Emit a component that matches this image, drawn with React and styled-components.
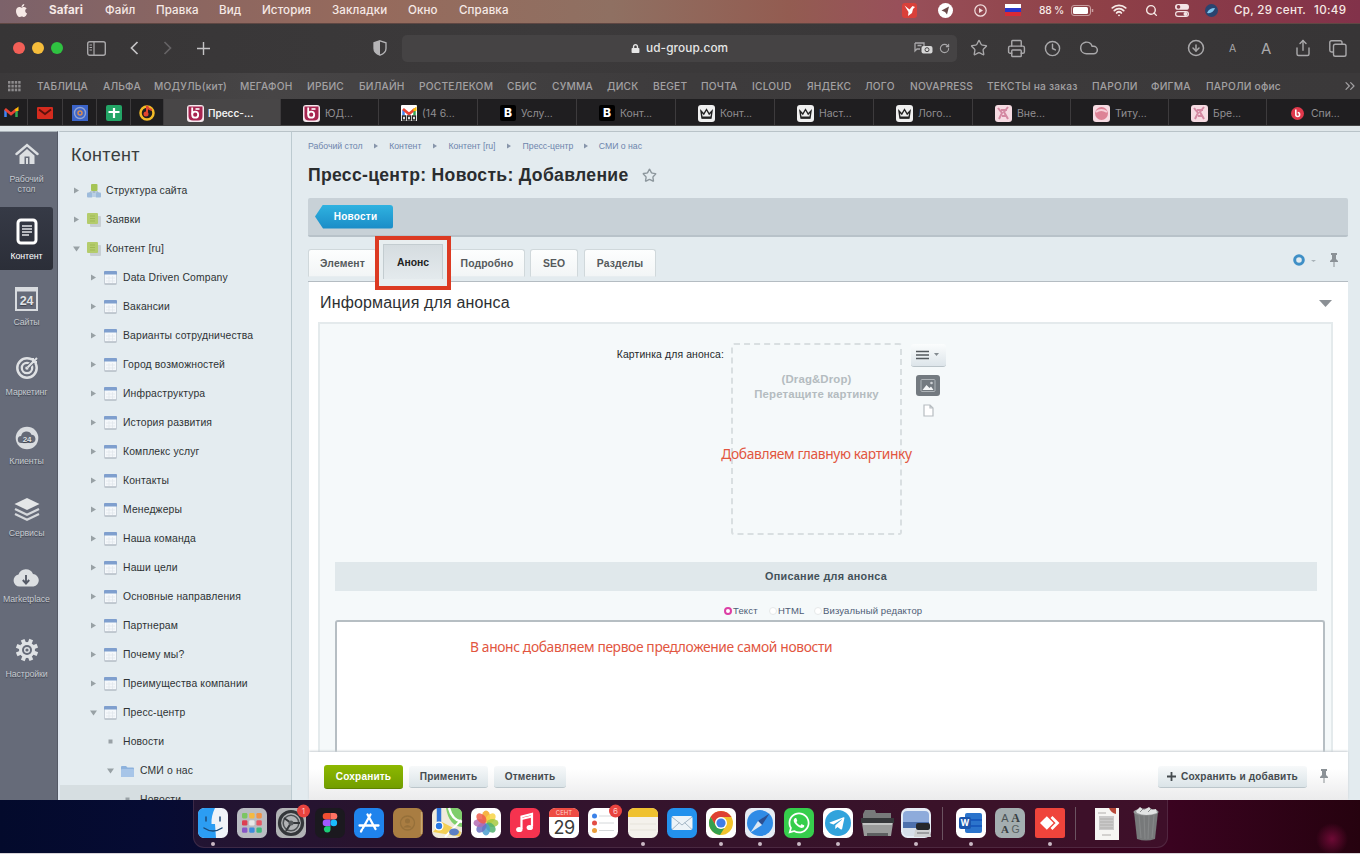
import React from "react";
import styled, { createGlobalStyle, css } from "styled-components";
import {
  Star, Printer, Clock, Cloud, ArrowDownCircle, Share, Wifi, Search,
  RotateCw, ChevronsRight,
} from "lucide-react";
import { FaApple, FaWhatsapp, FaTelegramPlane, FaLock } from "react-icons/fa";

const GlobalStyle = createGlobalStyle`
  * { box-sizing: border-box; }
  body { margin: 0; background: #000; overflow: hidden; }
  svg { display: block; flex: none; }
`;

const Desktop = styled.div`
  width: 1360px;
  height: 854px;
  display: flex;
  flex-direction: column;
  overflow: hidden;
  font-family: Inter, "Liberation Sans", sans-serif;
  white-space: nowrap;
`;

/* ---------- macOS menu bar ---------- */
const MenuBar = styled.div`
  height: 24px;
  flex: none;
  display: flex;
  align-items: center;
  padding-bottom: 3px;
  color: #f6e9e6;
  font-size: 11.6px;
  font-weight: 500;
  letter-spacing: 0.1px;
  border-bottom: 1px solid #5f4743;
  background: linear-gradient(90deg, #7c626a 0%, #8c6660 15%, #966a5c 27%, #8f7062 45%, #935c51 58%, #98505a 66%, #8f4147 80%, #82324a 100%);
`;
const Slot = styled.div`
  width: ${(p) => p.$w}px;
  margin-left: ${(p) => p.$ml || 0}px;
  flex: none;
  display: flex;
  align-items: center;
  font-weight: ${(p) => (p.$bold ? 700 : "inherit")};
  font-size: ${(p) => (p.$size ? p.$size + "px" : "inherit")};
  letter-spacing: ${(p) => (p.$ls !== undefined ? p.$ls + "px" : "inherit")};
`;

/* ---------- Safari chrome ---------- */
const Chrome = styled.div`
  height: 49px;
  flex: none;
  display: flex;
  align-items: center;
  padding: 0 0 1px 13px;
  color: #a9a8aa;
  background: linear-gradient(90deg, #373536, #3c3a3b 40%, #373536);
`;
const Light = styled.i`
  width: 12px;
  height: 12px;
  border-radius: 50%;
  margin-right: 7px;
  background: ${(p) => p.$c};
`;
const AddressBar = styled.div`
  width: 555px;
  height: 27px;
  border-radius: 5px;
  background: #454344;
  color: #e6e6e6;
  display: flex;
  align-items: center;
  padding-left: 229px;
  margin-right: 13px;
  font-size: 11.8px;
  font-weight: 500;
  letter-spacing: 0.1px;
  gap: 6px;
`;
const AddressTools = styled.div`
  margin-left: auto;
  padding-right: 7px;
  display: flex;
  align-items: center;
  gap: 6px;
  color: #a9a8aa;
`;
const Bookmarks = styled.div`
  height: 26px;
  flex: none;
  display: flex;
  align-items: center;
  padding: 0 0 0 8px;
  color: #a3a1a3;
  font-size: 10.2px;
  font-weight: 500;
  letter-spacing: 0.2px;
  background: linear-gradient(90deg, #3b393a, #474546 20%, #3d3b3c 50%, #3b393a);
`;
const TabStrip = styled.div`
  height: 27px;
  flex: none;
  display: flex;
  background: #1f1e20;
  border-bottom: 1px solid #454545;
`;
const Pinned = styled.div`
  width: ${(p) => p.$w}px;
  padding: 2px ${(p) => p.$pr || 0}px 0 0;
  flex: none;
  display: flex;
  align-items: center;
  justify-content: center;
  border-right: 1px solid #3d3b3d;
`;
const BrowserTab = styled.div`
  width: ${(p) => p.$w}px;
  flex: none;
  display: flex;
  align-items: center;
  gap: ${(p) => (p.$active ? 4 : 5)}px;
  padding: 2px 0 0 ${(p) => (p.$active ? 23 : 22)}px;
  overflow: hidden;
  border-right: 1px solid #3d3b3d;
  font-size: ${(p) => (p.$active ? 10 : 10.4)}px;
  font-weight: ${(p) => (p.$active ? 600 : 400)};
  color: ${(p) => (p.$active ? "#f2f2f2" : "#918f92")};
  background: ${(p) => (p.$active ? "#484647" : "transparent")};
`;

/* ---------- Page ---------- */
const Page = styled.div`
  height: 674px;
  flex: none;
  display: flex;
  overflow: hidden;
  border-top: 5px solid #e0e7ea;
  background: #e3ebef;
  font-family: "Liberation Sans", Arial, sans-serif;
`;
const Rail = styled.nav`
  width: 58px;
  flex: none;
  border-top: 1px solid #a9b1b8;
  background: #666b79;
  border-right: 1px solid #545966;
  display: flex;
  flex-direction: column;
`;
const RailItem = styled.div`
  height: ${(p) => p.$h}px;
  width: 53px;
  padding-top: ${(p) => p.$pt}px;
  display: flex;
  flex-direction: column;
  align-items: center;
  gap: ${(p) => p.$gap}px;
  color: ${(p) => (p.$active ? "#fff" : "#c6cad0")};
  font-size: 8.8px;
  letter-spacing: -0.1px;
  line-height: 10px;
  text-align: center;
  white-space: pre;
  text-shadow: 0 1px 1px #3b3f4a;
  ${(p) => p.$active && css`
    background: linear-gradient(#363a46, #2b2e38);
    border-radius: 0 3px 3px 0;
  `}
`;
const Tree = styled.aside`
  width: 234px;
  flex: none;
  border-top: 1px solid #b9c3c8;
  border-left: 2px solid #dfe7f0;
  border-right: 1px solid #bccad0;
  background: #e4ecf0;
  overflow: hidden;
  color: #2f3335;
`;
const TreeTitle = styled.h2`
  margin: 0;
  padding: 13px 0 0 11px;
  height: 44px;
  font-size: 18px;
  line-height: 20px;
  font-weight: 400;
  letter-spacing: 0.3px;
  color: #3a3e40;
`;
const TreeRow = styled.div`
  height: 29px;
  display: flex;
  align-items: center;
  padding-left: ${(p) => p.$pad}px;
  font-size: 10.4px;
  letter-spacing: 0.14px;
  background: ${(p) => (p.$selected ? "#d6dee1" : "transparent")};
`;
const Marker = styled.span`
  width: ${(p) => p.$w}px;
  flex: none;
`;

const Main = styled.main`
  flex: 1;
  display: flex;
  flex-direction: column;
  padding: 0 12px 0 16px;
  border-top: 1px solid #b9c3c8;
  color: #2f3335;
`;
const Crumbs = styled.div`
  height: 28px;
  display: flex;
  align-items: center;
  font-size: 8.7px;
  color: #6d85ad;
`;
const Title = styled.h1`
  margin: 0;
  height: 30px;
  display: flex;
  align-items: center;
  gap: 13px;
  font-size: 17.6px;
  font-weight: 700;
  letter-spacing: 0.3px;
  color: #2a2d2f;
`;
const ActionBar = styled.div`
  height: 39px;
  margin-top: 8px;
  flex: none;
  display: flex;
  align-items: center;
  padding-left: 7px;
  background: #c8d1d7;
  border-bottom: 2px solid #b8c2c9;
  border-radius: 2px;
`;
const BackButton = styled.div`
  width: 78px;
  height: 24px;
  padding-left: 3px;
  display: flex;
  align-items: center;
  justify-content: center;
  color: #fff;
  font-size: 10px;
  font-weight: 700;
  letter-spacing: 0.25px;
  background: linear-gradient(#2fb2e0, #1b8cc7);
  border-radius: 3px;
  clip-path: polygon(0 50%, 8px 0, 100% 0, 100% 100%, 8px 100%);
`;
const FormTabs = styled.div`
  height: 45px;
  padding-top: 12px;
  display: flex;
  align-items: flex-start;
  border-bottom: 1px solid #b4bcc2;
`;
const FormTab = styled.div`
  width: ${(p) => p.$w}px;
  margin-right: ${(p) => p.$mr || 0}px;
  height: 28px;
  display: flex;
  align-items: center;
  justify-content: center;
  font-size: 10.4px;
  font-weight: 700;
  letter-spacing: 0.1px;
  color: #55595c;
  background: linear-gradient(#fdfefe, #f2f5f6);
  border: 1px solid #d0d8db;
  border-bottom-color: #e7edf0;
  border-radius: 3px 3px 0 0;
`;
const Highlight = styled.div`
  width: 76px;
  height: 54px;
  margin: -13px -2px 0 -2px;
  position: relative;
  border: 4px solid #dc3a22;
  padding: 4px;
  background: #e8eef0;
`;
const ActiveTab = styled.div`
  height: 35px;
  border: 1px solid #c3ccd0;
  border-width: 1px 1px 0;
  background: linear-gradient(#d5dce0, #e4eaed);
  display: flex;
  align-items: center;
  justify-content: center;
  font-size: 10.4px;
  font-weight: 700;
  color: #222;
`;
const TabTools = styled.div`
  margin: 4px 9px 0 auto;
  display: flex;
  align-items: center;
  gap: 6px;
`;
const Card = styled.section`
  flex: 1;
  min-height: 0;
  margin-left: 1px;
  padding: 0 15px 0 9px;
  background: #fff;
  overflow: hidden;
`;
const CardHead = styled.div`
  height: 40px;
  display: flex;
  align-items: center;
  justify-content: space-between;
  padding: 2px 1px 0 2px;
  font-size: 16px;
  letter-spacing: 0.15px;
  color: #2d3032;
`;
const Body = styled.div`
  height: 440px;
  background: #f5f9fa;
  border: 2px solid #e4eaec;
  border-bottom: 0;
  padding: 0 6px 0 15px;
`;
const PictureRow = styled.div`
  height: 238px;
  padding-top: 19px;
  display: flex;
`;
const FieldLabel = styled.div`
  width: 389px;
  padding-top: 5px;
  text-align: right;
  font-size: 10.4px;
  letter-spacing: 0.13px;
  line-height: 14px;
  color: #25282a;
`;
const DropZone = styled.div`
  width: 171px;
  height: 192px;
  margin: 0 8px 0 7px;
  border: 2px dashed #d9dfe1;
  border-radius: 3px;
  padding-top: 27px;
  display: flex;
  flex-direction: column;
  align-items: center;
  font-size: 11.4px;
  line-height: 14.5px;
  font-weight: 700;
  letter-spacing: 0.15px;
  color: #b4bcc0;
`;
const Note = styled.div`
  font-family: "Noto Sans", "Open Sans", sans-serif;
  font-weight: 400;
  font-size: 13.8px;
  line-height: 18px;
  letter-spacing: -0.36px;
  color: #e2563f;
  margin: ${(p) => p.$m};
`;
const DropTools = styled.div`
  display: flex;
  flex-direction: column;
  align-items: center;
  width: 36px;
`;
const MenuButton = styled.div`
  width: 35px;
  height: 23px;
  margin-top: 1px;
  display: flex;
  align-items: center;
  justify-content: center;
  background: linear-gradient(#fbfdfd, #dde5ea);
  border-bottom: 1px solid #b9c3c8;
  border-radius: 3px;
`;
const ToolGap = styled.div`
  height: 8px;
`;
const Section = styled.div`
  height: 29px;
  margin-right: 8px;
  padding-bottom: 2px;
  display: flex;
  align-items: center;
  justify-content: center;
  background: #e0e8eb;
  color: #44525a;
  font-size: 10.8px;
  font-weight: 700;
  letter-spacing: 0.28px;
`;
const Modes = styled.div`
  height: 29px;
  padding: 10px 0 0 389px;
  display: flex;
  align-items: center;
  font-size: 9.5px;
  letter-spacing: 0.14px;
  color: #4d5b75;
`;
const Radio = styled.i`
  width: 8px;
  height: 8px;
  border-radius: 50%;
  margin-right: 1px;
  margin-top: 1px;
  background: #fff;
  border: ${(p) => (p.$on ? "2.5px solid #dc3fa5" : "1px solid #e6e9ea")};
`;
const TextArea = styled.div`
  height: 150px;
  border: 2px solid #b6bec3;
  border-bottom: 0;
  border-radius: 3px 3px 0 0;
  background: #fff;
`;
const Footer = styled.footer`
  height: 48px;
  flex: none;
  margin: 0 0 0 1px;
  display: flex;
  align-items: center;
  gap: 6px;
  padding: 0 19px 0 15px;
  background: linear-gradient(#fff 0, #fff 35%, #ebebec 100%);
  box-shadow: 0 -1px 2px #c9cfd3;
  position: relative;
`;
const Button = styled.div`
  width: ${(p) => p.$w}px;
  height: ${(p) => (p.$primary ? 24 : 22)}px;
  margin-top: 1px;
  display: flex;
  align-items: center;
  justify-content: center;
  gap: 5px;
  font-size: 10.1px;
  font-weight: 700;
  letter-spacing: 0.15px;
  border-radius: 3px;
  color: ${(p) => (p.$primary ? "#fff" : "#454b4f")};
  background: ${(p) => (p.$primary ? "linear-gradient(#8db800, #729e00)" : "linear-gradient(#f7f9fa, #dbe4e8)")};
  border-bottom: 1px solid ${(p) => (p.$primary ? "#5e8400" : "#bcc6cb")};
`;
const Push = styled.div` flex: 1; `;

/* ---------- Dock ---------- */
const DockArea = styled.div`
  height: 54px;
  flex: none;
  display: flex;
  justify-content: center;
  border-bottom: 1px solid #d8d4d8;
  background:
    radial-gradient(circle at 1332px 39px, #6d0a35 0, transparent 16px),
    linear-gradient(90deg, #030a2c 0, #060b33 11%, #150a28 28%, #280a26 45%, #33081f 70%, #3a0320 86%, #26020f 100%);
`;
const Dock = styled.div`
  width: 975px;
  height: 48px;
  display: flex;
  padding-top: 7px;
  border-radius: 0 0 11px 11px;
  background: rgba(68, 34, 56, 0.42);
  border: 1px solid rgba(140, 110, 130, 0.25);
  border-top: 0;
`;
const DockItem = styled.div`
  width: 39.05px;
  flex: none;
  display: flex;
  flex-direction: column;
  align-items: center;
  gap: 4px;
`;
const Running = styled.i`
  width: 4px;
  height: 4px;
  border-radius: 50%;
  background: #c9b9c4;
`;
const DockLine = styled.i`
  width: 1px;
  height: 33px;
  margin: 0 ${(p) => p.$r}px 0 ${(p) => p.$l}px;
  background: #6b5361;
`;

/* ---------- Small drawings ---------- */
const S = ({ w, h = w, vb, children, ...r }) => (
  <svg width={w} height={h} viewBox={vb || `0 0 ${w} ${h}`} fill="none" {...r}>{children}</svg>
);

const Arrow = ({ open }) => (
  <S w={7}><path d={open ? "M0 1.500h7L3.500 6.500z" : "M1 .5v6L6 3.500z"} fill="#98a1a5" /></S>
);
const Bullet = () => <S w={5}><rect x="0.5" y="0.5" width="4" height="4" fill="#99a1a6" /></S>;
const TableIcon = () => (
  <S w={13} h={14}>
    <rect x=".5" y=".5" width="12" height="12.500" rx="1" fill="#f5f8fb" stroke="#c6ced6" />
    <path d="M.5 13h12" stroke="#aab3bc" />
    <path d="M0 1q0-1 1-1h11q1 0 1 1v2.600H0z" fill="#7f9fce" />
    <path d="M2 7h9M2 10h9M5 5v7M8.500 5v7" stroke="#dfe5eb" strokeWidth=".7" />
  </S>
);
const GreenIcon = () => (
  <S w={14}>
    <rect x="3" y="3" width="11" height="11" rx="1" fill="#c8cfd4" />
    <rect x="0" y="0" width="11" height="11" rx="1" fill="#b4cc6c" />
    <path d="M3 3h5M3 5.500h5M3 8h5" stroke="#a0ba54" />
  </S>
);
const StructIcon = () => (
  <S w={14}>
    <path d="M7 6v3M3 10V8h8v2" stroke="#92a9bd" />
    <rect x="4" y="0" width="6.500" height="7" rx="1" fill="#a5c455" />
    <rect x="0" y="8.500" width="5.500" height="5" rx="1" fill="#9dbbdb" />
    <rect x="8.500" y="8.500" width="5.500" height="5" rx="1" fill="#9dbbdb" />
    <rect x="5" y="9" width="4" height="4" fill="#b9cfe5" />
  </S>
);
const FolderIcon = () => (
  <S w={14} h={12}>
    <path d="M0 2q0-1 1-1h4l1.500 1.500H12q1 0 1 1V11q0 1-1 1H1q-1 0-1-1z" fill="#8db2dd" />
    <rect x="0" y="4" width="13" height="8" rx="1" fill="#a7c5e8" />
  </S>
);
const Pin = () => (
  <S w={10} h={14}><path d="M2 0h6v2H7v4l2 2v1H1V8l2-2V2H2zM4.500 9h1v5h-1z" fill="#8b9196" /></S>
);

const RailHome = () => (
  <S w={24} h={22}>
    <path d="M1.500 11L12 2l10.500 9" stroke="#dcdfe2" strokeWidth="2.400" strokeLinecap="round" />
    <path d="M4.500 12.500L12 6l7.500 6.500V21h-15z" fill="#dcdfe2" />
    <path d="M9.500 21v-7.500h5V21z" fill="#666b79" /><path d="M11 21v-6h2v6z" fill="#dcdfe2" />
  </S>
);
const RailContent = () => (
  <S w={22} h={27}>
    <rect x="2" y="2" width="18" height="23" rx="3" stroke="#fff" strokeWidth="3" />
    <path d="M6 8h10M6 11h10M6 14h10M6 17h7" stroke="#e2e4e7" strokeWidth="1.700" />
  </S>
);
const RailSites = () => (
  <S w={24} h={24}>
    <rect x="1" y="1" width="21" height="22" stroke="#d8dbdf" strokeWidth="2" />
    <path d="M1 3h21" stroke="#d8dbdf" strokeWidth="3" />
    <text x="11.500" y="18" textAnchor="middle" fontSize="12.500" fontWeight="700" fontFamily="Liberation Sans" fill="#e0e3e6">24</text>
  </S>
);
const RailTarget = () => (
  <S w={24}>
    <circle cx="12" cy="13" r="9.700" stroke="#dfe1e4" strokeWidth="2.500" />
    <circle cx="12" cy="13" r="5.200" stroke="#dfe1e4" strokeWidth="2.300" />
    <circle cx="12" cy="13" r="1.800" fill="#dfe1e4" />
    <path d="M12.500 12.500L22 3" stroke="#666b79" strokeWidth="4" />
    <path d="M12.500 12.500L22 3M18 3v4h4" stroke="#dfe1e4" strokeWidth="2" />
  </S>
);
const RailClients = () => (
  <S w={24}>
    <circle cx="12" cy="12" r="11.300" fill="#d9dce0" />
    <path d="M6.500 17a3.500 3.500 0 0 1-.4-7 5.500 5.500 0 0 1 10.400-1.200A4.200 4.200 0 0 1 17.500 17z" fill="#646977" />
    <text x="12" y="15.500" textAnchor="middle" fontSize="8" fontWeight="700" fontFamily="Liberation Sans" fill="#dde0e3">24</text>
  </S>
);
const RailLayers = () => (
  <S w={26} h={24}>
    <path d="M13 0l12.500 6L13 12 .5 6z" fill="#e4e6e8" />
    <path d="M1 11l12 5.800L25 11M1 16l12 5.800L25 16" stroke="#d5d8dc" strokeWidth="2.300" />
  </S>
);
const RailCloud = () => (
  <S w={27} h={19}>
    <path d="M6.500 18.500a6 6 0 0 1-1-11.900A7.800 7.800 0 0 1 20 6a6.300 6.300 0 0 1 .5 12.500z" fill="#dcdfe2" />
    <path d="M13 7v8M9.800 12l3.200 3.500 3.200-3.500" stroke="#555a67" strokeWidth="1.900" />
  </S>
);
const RailGear = () => (
  <S w={24}>
    {[0, 45, 90, 135].map((a) => (
      <path key={a} d="M12 .8v22.400" stroke="#dfe2e5" strokeWidth="4" transform={`rotate(${a + 22} 12 12)`} />
    ))}
    <circle cx="12" cy="12" r="8" fill="#dfe2e5" />
    <circle cx="12" cy="12" r="5" fill="#666b79" />
    <circle cx="12" cy="12" r="3" fill="#dfe2e5" /><circle cx="12" cy="12" r="1.600" fill="#666b79" />
  </S>
);

/* favicons */
const BLogo = ({ dot }) => (
  <S w={17}>
    {dot ? <circle cx="8.500" cy="8.500" r="6.500" fill="#e0384b" /> : <><rect width="17" height="17" rx="3" fill="#f5e7ec" /><path d="M1.500 1.500h14v9.500q0 4.500-4.500 4.500H6q-4.500 0-4.500-4.500z" fill="#a82550" /></>}
    {dot
      ? <path d="M6.800 4.500v5q0 2 1.900 2t1.900-2-1.900-2" stroke="#fff" strokeWidth="1.600" />
      : <><path d="M5.200 2.500V9.500" stroke="#fff" strokeWidth="1.800" /><circle cx="8.200" cy="9.700" r="3" stroke="#fff" strokeWidth="1.800" /><path d="M8.500 4h4" stroke="#fff" strokeWidth="1.600" /></>}
  </S>
);
const BlackB = () => (
  <S w={16}><rect width="16" height="16" rx="2" fill="#000" /><text x="8" y="12.300" textAnchor="middle" fontSize="12" fontWeight="800" fontFamily="Inter" fill="#fff">B</text></S>
);
const Crown = () => (
  <S w={17}><rect width="17" height="17" rx="3" fill="#f0f0f0" /><path d="M3 6l2.800 3L8.500 4.500 11.200 9 14 6l-1 7H4z" stroke="#222" strokeWidth="1.400" fill="#f0f0f0" /><path d="M4 12.500h9" stroke="#222" strokeWidth="2" /></S>
);
const Pink = ({ round }) => (
  <S w={17}><rect width="17" height="17" rx="3" fill="#f6dbe2" />
    {round ? <><circle cx="8.500" cy="8.500" r="6.500" fill="#dd8296" /><path d="M3 7q5-4 11 0" stroke="#f6ccd6" strokeWidth="2" /></>
      : <path d="M3 3l4 5-3 6M13 2L9 7l4 7M6 5h6M7 11h5" stroke="#d489a2" strokeWidth="2" />}
  </S>
);
const Gmail = ({ news }) => (
  <S w={16}>
    {news && <rect width="16" height="16" rx="1" fill="#fff" />}
    <path d="M2.500 12V5" stroke="#4285f4" strokeWidth="2.500" /><path d="M13.500 12V5" stroke="#34a853" strokeWidth="2.500" />
    <path d="M2 4l6 5 6-5" stroke="#ea4335" strokeWidth="2.800" /><path d="M12.300 5.500L14.500 3.700V6" stroke="#fbbc04" strokeWidth="2" />
    {news && <><rect y="10" width="16" height="6" fill="#fff" /><path d="M1.500 11h3v4h-3zM6.500 11h3v4h-3zM11.500 11h3v4h-3z" stroke="#222" strokeWidth="1.300" /></>}
  </S>
);

/* dock tiles */
const Tile = ({ bg = "#fff", children, badge }) => (
  <S w={34} h={31} vb="-2 -1 34 31" overflow="visible">
    <rect width="30" height="30" rx="6.500" fill={bg} />
    {children}
    {badge && <><circle cx="27.500" cy="3" r="6.500" fill="#e8433f" /><text x="27.500" y="6" textAnchor="middle" fontSize="8" fontFamily="Inter" fill="#ffc9c5">{badge}</text></>}
  </S>
);
const petals = ["#f5a623", "#f8d347", "#a5c940", "#4fb06d", "#4b9ed0", "#6b70c4", "#b46bb4", "#ee5a4c"];
const dock = [
  [<Tile bg="#f0f3f8"><path d="M6.500 0H17q-4 8-3.500 16H17l1 14H6.500Q0 30 0 23.500v-17Q0 0 6.500 0z" fill="#2c9df3" /><path d="M8 9v4M22 9v4M6 20q9 6 18 0" stroke="#1c4a79" strokeWidth="1.500" strokeLinecap="round" /></Tile>, 1],
  [<Tile bg="#b9bcc2">{["#7bc563", "#f5b942", "#f0924a", "#dd3f51", "#e8e8e8", "#e55764", "#8857c6", "#3f8cdd", "#40b97b"].map((c, i) => <rect key={i} x={5 + (i % 3) * 7.2} y={5 + Math.floor(i / 3) * 7.2} width="5.400" height="5.400" rx="1.300" fill={c} />)}</Tile>],
  [<Tile bg="#b1b3b5" badge="1"><circle cx="15" cy="15" r="11.500" stroke="#34373a" strokeWidth="3.200" /><circle cx="15" cy="15" r="7.800" stroke="#4c5053" strokeWidth="1.500" /><path d="M15 15L8 10M15 15h9M15 15l-5 8" stroke="#34373a" strokeWidth="2" /><circle cx="15" cy="15" r="2.500" fill="#55595c" /></Tile>],
  [<Tile bg="#1b191f"><path d="M11 5h4.500v6.600H11a3.300 3.300 0 0 1 0-6.600z" fill="#f04e31" /><path d="M15.500 5H19a3.300 3.300 0 0 1 0 6.600h-3.500z" fill="#ff7262" /><path d="M11 11.600h4.500v6.600H11a3.300 3.300 0 0 1 0-6.600z" fill="#a259ff" /><circle cx="18.800" cy="14.900" r="3.300" fill="#1abcfe" /><path d="M11 18.200h4.500v3.300a3.300 3.300 0 1 1-4.500-3.300z" fill="#1bce78" /></Tile>],
  [<Tile bg="#1f83ec"><path d="M16.500 6.500L9 20M13.500 6.500L21.500 21M5.500 17.500h19M8 21.500l-1 2" stroke="#fff" strokeWidth="2.300" strokeLinecap="round" /></Tile>],
  [<Tile bg="#a97d42"><path d="M28.500 4v22" stroke="#c9a873" strokeWidth="1.500" /><circle cx="14.500" cy="15" r="7" stroke="#96703a" strokeWidth="1.300" /><circle cx="14.500" cy="13" r="2.500" fill="#96703a" /><path d="M10 19.500q4.500-5 9 0z" fill="#96703a" /></Tile>],
  [<Tile bg="#efeadb"><path d="M14 0h9.500Q30 0 30 6.500V19Q17 18 14 0z" fill="#7fce6c" /><path d="M17 0q3 12 13 14" stroke="#fff" strokeWidth="2.500" /><path d="M1 24L28 28.500 29 24 10 14z" fill="#f3cf55" /><path d="M7 0v17" stroke="#2f74d9" strokeWidth="4.500" /><circle cx="7" cy="18" r="4.500" fill="#fff" /><circle cx="7" cy="18" r="3.200" fill="#2878e3" /><path d="M13 29L29 12" stroke="#fff" strokeWidth="2" /><ellipse cx="22" cy="24" rx="5" ry="3.500" fill="#5b7fc4" /></Tile>],
  [<Tile>{petals.map((c, i) => <ellipse key={i} cx="15" cy="8.500" rx="4" ry="6" fill={c} opacity=".85" transform={`rotate(${i * 45} 15 15)`} />)}</Tile>],
  [<Tile bg="#f5334f"><path d="M11.500 21V8.500L22 6v12.500" stroke="#fff" strokeWidth="2.200" /><path d="M11.500 11L22 8.500" stroke="#fff" strokeWidth="2" /><ellipse cx="9.300" cy="21.500" rx="3.200" ry="2.600" fill="#fff" /><ellipse cx="19.800" cy="19.500" rx="3.200" ry="2.600" fill="#fff" /></Tile>],
  [<Tile><path d="M0 9V6.500Q0 0 6.500 0h17Q30 0 30 6.500V9z" fill="#ee4c43" /><text x="15" y="7" textAnchor="middle" fontSize="6" fontFamily="Inter" fill="#ffd3d0">СЕНТ</text><text x="15" y="25.500" textAnchor="middle" fontSize="18" fontFamily="Inter" fill="#3b3b3b" letterSpacing="-.5">29</text></Tile>],
  [<Tile badge="6"><circle cx="6.500" cy="8" r="2.500" fill="#3b82e8" /><circle cx="6.500" cy="15" r="2.500" fill="#e34d44" /><circle cx="6.500" cy="22.500" r="2.500" fill="#ea9e3b" /><path d="M11 8h14M11 15h15M11 22.500h15" stroke="#d5d8da" /></Tile>],
  [<Tile bg="#f4f1ec"><path d="M0 9V6.500Q0 0 6.500 0h17Q30 0 30 6.500V9z" fill="#efc130" /><path d="M2 16h26M2 22h26" stroke="#e0dcd5" strokeWidth=".7" /></Tile>, 1],
  [<Tile bg="#2391ed"><rect x="4.500" y="8" width="21" height="14" rx="2" fill="#edf3f8" /><path d="M5 9l10 8 10-8M5 21.500l7.500-7M25 21.500l-7.500-7" stroke="#a4b6c5" /></Tile>],
  [<Tile><circle cx="15" cy="15" r="12" fill="#f2c32d" /><path d="M4.600 9A12 12 0 0 1 25.400 9H15a6 6 0 0 0-5 9z" fill="#de4034" /><path d="M4.600 9A12 12 0 0 0 14 27l5-8a6 6 0 0 1-9-1z" fill="#35a04e" /><circle cx="15" cy="15" r="6" fill="#fff" /><circle cx="15" cy="15" r="4.600" fill="#3f7de8" /></Tile>, 1],
  [<Tile bg="#e6ecf4"><circle cx="15" cy="15" r="13" fill="#2f8be6" /><path d="M24.500 5.500L17 17l-4-4z" fill="#2c4f91" /><path d="M5.500 24.500L13 13l4 4z" fill="#dce7f2" /></Tile>, 1],
  [<Tile bg="#36ce4c"><FaWhatsapp x="3" y="3" size={24} color="#fff" /></Tile>, 1],
  [<Tile><circle cx="15" cy="15" r="13" fill="#31a3dc" /><FaTelegramPlane x="5.500" y="7" size={17} color="#fff" /></Tile>, 1],
  [<S w={34} h={31} vb="-2 -1 34 31"><path d="M3 2h10l1 3h15v7H1V6z" fill="#777a7a" /><path d="M-1 10h33v5H-1z" fill="#35383a" /><path d="M0 15h31l-2 13H2z" fill="#9a9c9b" /><path d="M5 25h21v3H5z" fill="#5d6061" /><path d="M1 15h29v2H1z" fill="#c2c4c3" /></S>],
  [<Tile bg="#e6edf6"><path d="M2 7q0-4 4-4h18q4 0 4 4v12H2z" fill="#8eabdb" /><path d="M2 14h26v6H2z" fill="#4d70ad" /><path d="M2 20h26v3q0 5-4 5H7q-5 0-5-5z" fill="#d7dfea" /><rect x="15" y="15" width="14" height="7" rx="2" fill="#25272b" /><path d="M14 22h15l1 7H13z" fill="#cfd1d3" /><path d="M16 25h12" stroke="#6a6d70" /></Tile>, 1],
  "l1",
  [<Tile><rect x="9" y="5" width="17" height="20" rx="2" fill="#2b74cc" /><path d="M9 12h17M9 18h17" stroke="#185abd" strokeWidth="2" /><rect x="3" y="9" width="12" height="12" rx="2" fill="#1a55ad" /><text x="9" y="18" textAnchor="middle" fontSize="8.500" fontWeight="700" fontFamily="Inter" fill="#fff">W</text></Tile>, 1],
  [<Tile bg="#a4aeb0"><text x="10" y="14" textAnchor="middle" fontSize="11" fontFamily="Liberation Sans" fill="#4b5355">A</text><text x="20.500" y="14" textAnchor="middle" fontSize="12" fontWeight="700" fontFamily="Liberation Serif" fill="#384042">A</text><text x="10" y="25" textAnchor="middle" fontSize="11" fontWeight="700" fontFamily="Liberation Serif" fill="#384042">A</text><text x="20.500" y="25" textAnchor="middle" fontSize="10.500" fontFamily="Liberation Sans" fill="#566062">G</text></Tile>],
  [<S w={34} h={31} vb="-2 -1 34 31"><rect width="30" height="30" rx="2.500" fill="#ef443b" /><path d="M5 15l6.800-6.800L18.600 15l-6.800 6.800z" fill="#fff" /><path d="M16.500 9l6 6-6 6" stroke="#fff" strokeWidth="2.700" /></S>, 1],
  "l2",
  [<S w={34} h={33} vb="-2 -1 34 33"><path d="M3 0h24v32H3z" fill="#f6f5f3" /><path d="M17 0h7v6q-5-1-7-6z" fill="#b8493a" /><path d="M7 8h15v14H7z" fill="#cbcaca" /><path d="M6 5h8M8 11h13M8 14h13M8 17h13M8 20h13M10 27h9" stroke="#b0aeac" strokeWidth="1.100" /></S>],
  [<S w={34} h={35} vb="-2 2 34 35"><path d="M3 7h24l-3 27q-9 3-18 0z" fill="#77797a" /><path d="M8 10l2 23M13 10l1 24M18 10l-1 24M23 10l-2 23" stroke="#858788" strokeWidth="1.200" /><ellipse cx="15" cy="7" rx="12.500" ry="3.500" fill="#969899" /><path d="M5 6l4-4 4 3 5-3 3 3 4-1 1 4q-11 4-20 0z" fill="#e1e3e3" /><path d="M9 7l3-3M17 7l3-3" stroke="#8b8d8e" /></S>],
];

/* ---------- Data ---------- */
const menus = [["Safari", 56, 1], ["Файл", 51], ["Правка", 63], ["Вид", 43], ["История", 70], ["Закладки", 76], ["Окно", 51], ["Справка", 443]];
const bookmarks = [["ТАБЛИЦА", 66], ["АЛЬФА", 51], ["МОДУЛЬ(кит)", 86], ["МЕГАФОН", 67], ["ИРБИС", 52], ["БИЛАЙН", 60], ["РОСТЕЛЕКОМ", 88], ["СБИС", 45], ["СУММА", 55], ["ДИСК", 46], ["BEGET", 48], ["ПОЧТА", 51], ["ICLOUD", 55], ["ЯНДЕКС", 58], ["ЛОГО", 45], ["NOVAPRESS", 77], ["ТЕКСТЫ на заказ", 105], ["ПАРОЛИ", 59], ["ФИГМА", 55], ["ПАРОЛИ офис", 136]];
const browserTabs = [
  ["Пресс-...", 117, <BLogo />, 1], ["ЮД...", 98, <BLogo />], ["(14 6...", 99, <Gmail news />], ["Услу...", 99, <BlackB />],
  ["Конт...", 99, <BlackB />], ["Конт...", 99, <Crown />], ["Наст...", 99, <Crown />], ["Лого...", 99, <Crown />],
  ["Вне...", 98, <Pink />], ["Титу...", 98, <Pink round />], ["Бре...", 98, <Pink />], ["Спи...", 98, <BLogo dot />],
];
const infoBlocks = ["Data Driven Company", "Вакансии", "Варианты сотрудничества", "Город возможностей", "Инфраструктура", "История развития", "Комплекс услуг", "Контакты", "Менеджеры", "Наша команда", "Наши цели", "Основные направления", "Партнерам", "Почему мы?", "Преимущества компании"];
const crumbs = [["Рабочий стол", 66], ["Контент", 44], ["Контент [ru]", 59], ["Пресс-центр", 61], ["СМИ о нас", 60]];
const rail = [
  ["Рабочий\nстол", RailHome, 75, 11, 9], ["Контент", RailContent, 63, 11, 6, 1], ["Сайты", RailSites, 62, 17, 6],
  ["Маркетинг", RailTarget, 70, 23, 8], ["Клиенты", RailClients, 70, 24, 6], ["Сервисы", RailLayers, 70, 26, 6],
  ["Marketplace", RailCloud, 68, 26, 7], ["Настройки", RailGear, 70, 28, 7],
];

const TreeItem = ({ level, open, icon, leaf, selected, children }) => (
  <TreeRow $pad={13 + level * 17 + (leaf ? 1 : 0)} $selected={selected}>
    <Marker $w={leaf ? 15 : 14}>{leaf ? <Bullet /> : <Arrow open={open} />}</Marker>
    {icon && <Marker $w={19}>{icon}</Marker>}
    {children}
  </TreeRow>
);

export default function App() {
  return (
    <Desktop>
      <GlobalStyle />
      <MenuBar>
        <Slot $w={35} $ml={14}><FaApple size={15} /></Slot>
        {menus.map(([t, w, b]) => <Slot key={t} $w={w} $bold={b}>{t}</Slot>)}
        <Slot $w={36}><S w={15}><rect width="15" height="15" rx="3" fill="#d9403a" /><path d="M2.500 2.500l5 4 3-3.500 2.500 1-2 2-1 4-4 3 .5-4z" fill="#fff" /></S></Slot>
        <Slot $w={36}><S w={15}><circle cx="7.500" cy="7.500" r="7.500" fill="#fff" /><path d="M3.500 7.500l7.500-4-2 8-2-2.500z" fill="#6b4a4a" /></S></Slot>
        <Slot $w={31}><S w={13}><circle cx="6.500" cy="6.500" r="5.700" stroke="#f1dede" strokeWidth="1.200" /><path d="M5 4l4 2.500L5 9z" fill="#f1dede" /></S></Slot>
        <Slot $w={34}><S w={16} h={12}><path d="M0 0h16v4H0z" fill="#fff" /><path d="M0 4h16v4H0z" fill="#2a36c9" /><path d="M0 8h16v4H0z" fill="#d92a35" /></S></Slot>
        <Slot $w={32} $size={10.3} $ls={-0.2}>88 %</Slot>
        <Slot $w={40}><S w={23} h={11}><rect x=".5" y=".5" width="19" height="10" rx="2.500" stroke="#c99ea0" /><rect x="2" y="2" width="15" height="7" rx="1.500" fill="#fff" /><path d="M21.500 4v3" stroke="#c99ea0" strokeWidth="1.500" /></S></Slot>
        <Slot $w={34}><Wifi size={16} strokeWidth={2.8} /></Slot>
        <Slot $w={30}><Search size={13} strokeWidth={2.6} /></Slot>
        <Slot $w={30}><S w={14} h={13}><rect width="14" height="5.800" rx="2.900" fill="#f3e3e5" /><circle cx="3.500" cy="2.900" r="1.800" fill="#8a3c49" /><rect x=".6" y="7.600" width="12.800" height="4.800" rx="2.400" stroke="#f3e3e5" strokeWidth="1.200" /><circle cx="10.500" cy="10" r="2" fill="#f3e3e5" /></S></Slot>
        <Slot $w={29}><S w={13}><circle cx="6.500" cy="6.500" r="6.500" fill="#29446f" /><path d="M2 9q2-5 8-5-2 6-8 5z" fill="#7fc3ec" /></S></Slot>
        <Slot $w={80} $ls={0.3}>Ср, 29 сент.</Slot>
        <Slot $w={40} $ls={0.35}>10:49</Slot>
      </MenuBar>

      <Chrome>
        <Light $c="#f25f57" /><Light $c="#f6bd3b" /><Light $c="#2fc241" />
        <Slot $w={47} $ml={17}><S w={19} h={15}><rect x=".7" y=".7" width="17.600" height="13.600" rx="2" stroke="currentColor" strokeWidth="1.400" /><path d="M7 1v13M2.500 4h2.500M2.500 6.500h2.500M2.500 9h2.500" stroke="currentColor" strokeWidth="1.200" /></S></Slot>
        <Slot $w={33} $ml={-4}><S w={9} h={14}><path d="M7.500 1l-6 6 6 6" stroke="#c5c4c6" strokeWidth="1.700" /></S></Slot>
        <Slot $w={34}><S w={9} h={14}><path d="M1.500 1l6 6-6 6" stroke="#656365" strokeWidth="1.700" /></S></Slot>
        <Slot $w={176}><S w={13}><path d="M6.500 0v13M0 6.500h13" stroke="#c5c4c6" strokeWidth="1.400" /></S></Slot>
        <Slot $w={29}><S w={14} h={16}><path d="M7 .8l6 2v5.700q0 4.500-6 6.700-6-2.200-6-6.700V2.800z" stroke="#b5b4b6" strokeWidth="1.300" /><path d="M7 .8v14.400q-6-2.200-6-6.700V2.800z" fill="#b5b4b6" /></S></Slot>
        <AddressBar>
          <FaLock size={9} />ud-group.com
          <AddressTools>
            <S w={19} h={13}><path d="M1 1h9v3M1 1v8l2-2h3M3.500 3.500h4" stroke="currentColor" strokeWidth="1.300" /><rect x="7.500" y="4" width="11" height="7.500" rx="2" fill="#d6d6d6" /><circle cx="13" cy="7.700" r="2" stroke="#454344" /></S>
            <RotateCw size={11} strokeWidth={2.4} />
          </AddressTools>
        </AddressBar>
        <Slot $w={37}><Star size={18} strokeWidth={1.8} /></Slot>
        <Slot $w={37}><Printer size={19} strokeWidth={1.8} /></Slot>
        <Slot $w={35}><Clock size={17} strokeWidth={2} /></Slot>
        <Slot $w={107.5}><Cloud size={20} strokeWidth={1.8} /></Slot>
        <Slot $w={42.5}><ArrowDownCircle size={18} strokeWidth={2} /></Slot>
        <Slot $w={32} $size={10.5}>A</Slot>
        <Slot $w={32.5} $size={15}>A</Slot>
        <Slot $w={35.5}><Share size={18} strokeWidth={1.9} /></Slot>
        <Slot $w={20}><S w={18} h={17}><path d="M13 4V2.500Q13 .8 11.300 .8H2.500Q.8.8.8 2.500v7.800Q.8 12 2.500 12H4" stroke="currentColor" strokeWidth="1.400" /><rect x="4.500" y="4.300" width="12.500" height="12" rx="1.800" stroke="currentColor" strokeWidth="1.400" /></S></Slot>
      </Chrome>
      <Bookmarks>
        <Slot $w={29}><S w={13} h={11}>{[0, 1, 2, 3].map((c) => [0, 1, 2].map((r) => <rect key={c + "" + r} x={c * 3.4} y={r * 3.8} width="2.400" height="2.700" fill="#8d8b8d" />))}</S></Slot>
        {bookmarks.map(([t, w]) => <Slot key={t} $w={w}>{t}</Slot>)}
        <ChevronsRight size={16} strokeWidth={1.8} />
      </Bookmarks>
      <TabStrip>
        <Pinned $w={28} $pr={6}><Gmail /></Pinned>
        <Pinned $w={35}><S w={16} h={12}><rect width="16" height="12" rx="1" fill="#d52b1e" /><path d="M2 2.500l6 4.500 6-4.500" stroke="#5c110c" strokeWidth="1.800" /></S></Pinned>
        <Pinned $w={34}><S w={16}><rect width="16" height="16" fill="#3b64c9" /><circle cx="8" cy="8" r="5.500" stroke="#93a4d0" strokeWidth="1.400" /><circle cx="8" cy="8" r="2" stroke="#d98c55" strokeWidth="1.500" /></S></Pinned>
        <Pinned $w={34}><S w={16}><rect width="16" height="16" rx="2" fill="#23a566" /><path d="M8 3v10M2.500 7h11" stroke="#fff" strokeWidth="2.200" /></S></Pinned>
        <Pinned $w={33}><S w={16}><circle cx="8" cy="8" r="6.500" stroke="#f3bb27" strokeWidth="2.500" /><path d="M8 9V1q1 3 5 4" stroke="#e2452f" strokeWidth="2" /><circle cx="7" cy="9" r="2.500" fill="#e2452f" /></S></Pinned>
        {browserTabs.map(([t, w, ic, a], i) => <BrowserTab key={i} $w={w} $active={a}>{ic}{t}</BrowserTab>)}
      </TabStrip>

      <Page>
        <Rail>
          {rail.map(([t, Icon, h, pt, gap, a]) => (
            <RailItem key={t} $h={h} $pt={pt} $gap={gap} $active={a}><Icon />{t}</RailItem>
          ))}
        </Rail>
        <Tree>
          <TreeTitle>Контент</TreeTitle>
          <TreeItem level={0} icon={<StructIcon />}>Структура сайта</TreeItem>
          <TreeItem level={0} icon={<GreenIcon />}>Заявки</TreeItem>
          <TreeItem level={0} open icon={<GreenIcon />}>Контент [ru]</TreeItem>
          {infoBlocks.map((t) => <TreeItem key={t} level={1} icon={<TableIcon />}>{t}</TreeItem>)}
          <TreeItem level={1} open icon={<TableIcon />}>Пресс-центр</TreeItem>
          <TreeItem level={2} leaf>Новости</TreeItem>
          <TreeItem level={2} open icon={<FolderIcon />}>СМИ о нас</TreeItem>
          <TreeItem level={3} leaf selected>Новости</TreeItem>
        </Tree>
        <Main>
          <Crumbs>
            {crumbs.map(([t, w], i) => (
              <React.Fragment key={t}>
                <Slot $w={w}>{t}</Slot>
                {i < 4 && <Slot $w={15.2}><S w={4} h={6}><path d="M0 .5v5L4 3z" fill="#8795aa" /></S></Slot>}
              </React.Fragment>
            ))}
          </Crumbs>
          <Title>Пресс-центр: Новость: Добавление<Star size={15} color="#8d979d" strokeWidth={2.2} /></Title>
          <ActionBar><BackButton>Новости</BackButton></ActionBar>
          <FormTabs>
            <FormTab $w={69}>Элемент</FormTab>
            <Highlight><ActiveTab>Анонс</ActiveTab></Highlight>
            <FormTab $w={76} $mr={5}>Подробно</FormTab>
            <FormTab $w={48} $mr={6}>SEO</FormTab>
            <FormTab $w={72}>Разделы</FormTab>
            <TabTools>
              <S w={12}><circle cx="6" cy="6" r="4.300" stroke="#3f8fc6" strokeWidth="3" /></S>
              <S w={5}><path d="M0 2h5L2.500 4z" fill="#a9b3b9" /></S>
              <S w={1} h={2} /><Pin />
            </TabTools>
          </FormTabs>
          <Card>
            <CardHead>Информация для анонса<S w={13} h={7}><path d="M0 0h13L6.500 7z" fill="#8b9095" /></S></CardHead>
            <Body>
              <PictureRow>
                <FieldLabel>Картинка для анонса:</FieldLabel>
                <DropZone>
                  <span>(Drag&amp;Drop)</span><span>Перетащите картинку</span>
                  <Note $m="44px -20px 0 -20px">Добавляем главную картинку</Note>
                </DropZone>
                <DropTools>
                  <MenuButton><S w={24} h={10}><path d="M0 1.500h13M0 5h13M0 8.500h13" stroke="#545a5e" strokeWidth="1.600" /><path d="M18 3h5l-2.500 3z" fill="#848b90" /></S></MenuButton>
                  <ToolGap />
                  <S w={24} h={21}><rect width="24" height="21" rx="3" fill="#737a80" /><rect x="5" y="4.500" width="14" height="12" rx="1" stroke="#aeb4b8" /><path d="M6.500 15l4-5 3 3 1.500-1.500 2.500 3.500z" fill="#f3f5f6" /><circle cx="15.500" cy="8" r="1.300" fill="#cdd1d4" /></S>
                  <ToolGap />
                  <S w={11} h={13}><path d="M1 1h6l3 3v8H1zM7 1v3h3" fill="#fff" stroke="#b7bdc1" strokeWidth="1.200" /></S>
                </DropTools>
              </PictureRow>
              <Section>Описание для анонса</Section>
              <Modes>
                <Radio $on /><Slot $w={36}>Текст</Slot>
                <Radio /><Slot $w={36}>HTML</Slot>
                <Radio /><Slot $w={110}>Визуальный редактор</Slot>
              </Modes>
              <TextArea><Note $m="16px 0 0 133px">В анонс добавляем первое предложение самой новости</Note></TextArea>
            </Body>
          </Card>
          <Footer>
            <Button $w={79} $primary>Сохранить</Button>
            <Button $w={79}>Применить</Button>
            <Button $w={72}>Отменить</Button>
            <Push />
            <Button $w={149}><S w={9}><path d="M4.500 0v9M0 4.500h9" stroke="#454b4f" strokeWidth="1.800" /></S>Сохранить и добавить</Button>
            <S w={0} h={0} /><Pin />
          </Footer>
        </Main>
      </Page>

      <DockArea>
        <Dock>
          {dock.map((d, i) => d === "l1" ? <DockLine key={i} $l={7} $r={8.5} /> : d === "l2" ? <DockLine key={i} $l={6} $r={11} /> : (
            <DockItem key={i}>{d[0]}{d[1] && <Running />}</DockItem>
          ))}
        </Dock>
      </DockArea>
    </Desktop>
  );
}
